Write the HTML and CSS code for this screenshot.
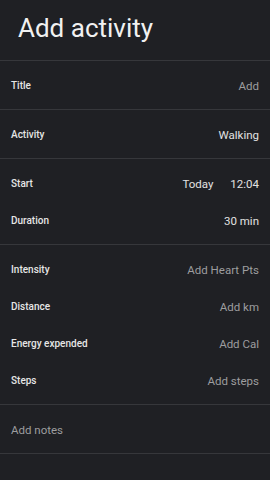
FILE: index.html
```html
<!DOCTYPE html>
<html lang="en">
<head>
    <meta charset="UTF-8">
    <meta name="viewport" content="width=device-width, initial-scale=1.0">
    <title>Add activity</title>
    <link rel="stylesheet" href="styles.css">
</head>
<body>
    <header class="top">
        <h1>Add activity</h1>
    </header>
    <section class="group">
        <div class="row"><span class="label">Title</span><span class="value hint">Add</span></div>
    </section>
    <section class="group">
        <div class="row"><span class="label">Activity</span><span class="value">Walking</span></div>
    </section>
    <section class="group">
        <div class="row">
            <span class="label">Start</span>
            <span class="value pair"><span>Today</span><span>12:04</span></span>
        </div>
        <div class="row"><span class="label">Duration</span><span class="value">30 min</span></div>
    </section>
    <section class="group">
        <div class="row"><span class="label">Intensity</span><span class="value hint">Add Heart Pts</span></div>
        <div class="row"><span class="label">Distance</span><span class="value hint">Add km</span></div>
        <div class="row"><span class="label">Energy expended</span><span class="value hint">Add Cal</span></div>
        <div class="row"><span class="label">Steps</span><span class="value hint">Add steps</span></div>
    </section>
    <section class="group">
        <div class="row"><span class="notes">Add notes</span></div>
    </section>
</body>
</html>
```
FILE: styles.css
```css
html,
body {
    margin: 0;
    padding: 0;
    height: 100%;
    background-color: #1f2024;
    font-family: Roboto, "Noto Sans", sans-serif;
}
.top {
    height: 61px;
    border-bottom: 1px solid #36373b;
    box-sizing: border-box;
}
.top h1 {
    margin: 0;
    padding: 13px 0 0 18px;
    font-size: 26px;
    font-weight: 400;
    color: #f1f1f1;
    line-height: 30px;
}
.group {
    padding: 6px 0 5px;
    border-bottom: 1px solid #36373b;
}
.row {
    height: 37px;
    display: flex;
    align-items: center;
    justify-content: space-between;
    padding: 0 11px;
}
.label {
    font-size: 10px;
    font-weight: 500;
    color: #e6e6e6;
}
.value {
    font-size: 11.5px;
    color: #e2e2e2;
}
.value.hint {
    color: #9d9d9f;
}
.pair {
    display: flex;
    gap: 17px;
}
.notes {
    font-size: 11.5px;
    color: #9d9d9f;
}
```
